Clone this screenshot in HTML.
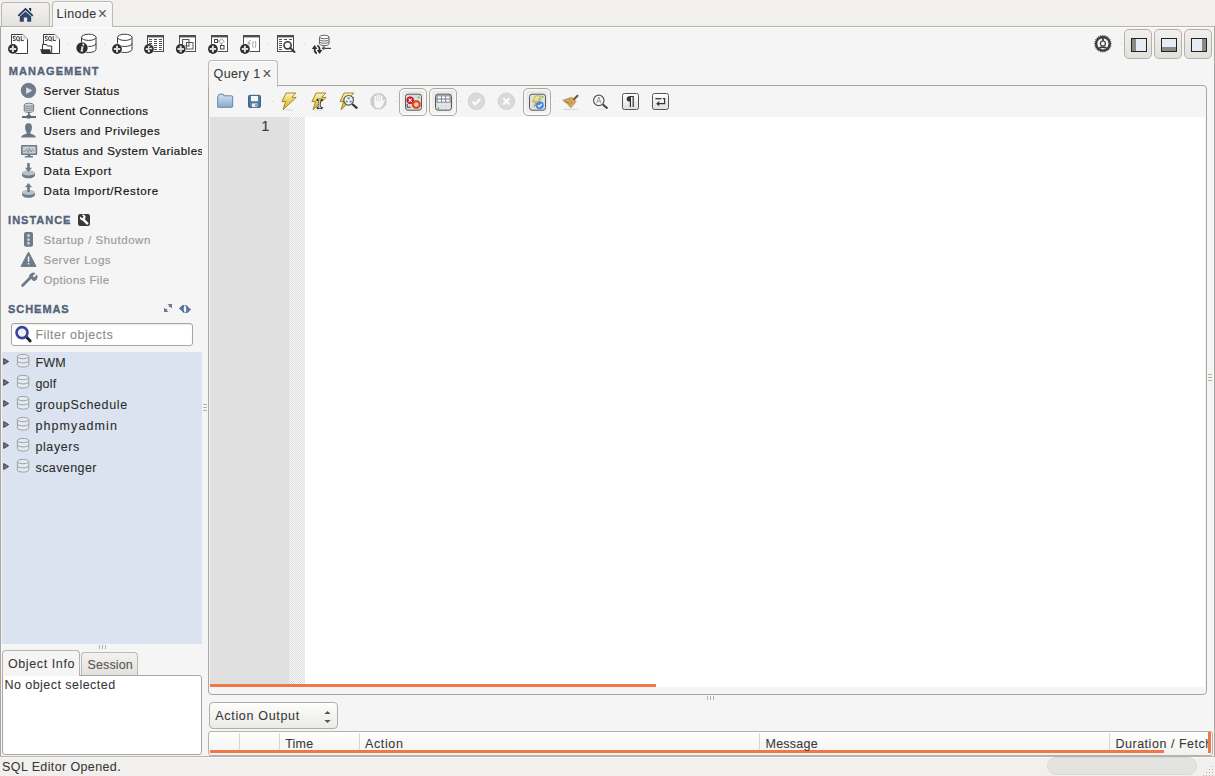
<!DOCTYPE html>
<html><head><meta charset="utf-8">
<style>
*{box-sizing:border-box;margin:0;padding:0}
html,body{width:1215px;height:776px;overflow:hidden;background:#f2f1f0;font-family:"Liberation Sans",sans-serif;color:#3c3c3c}
.a{position:absolute}
.t{position:absolute;white-space:nowrap;-webkit-text-stroke:0.2px currentColor}
svg{position:absolute;overflow:visible}
</style></head><body>
<div class="a" style="left:0px;top:0px;width:1215px;height:26px;background:#f1f0ee"></div>
<div class="a" style="left:1px;top:2px;width:49px;height:24px;border:1px solid #bcb9b2;border-bottom:none;border-radius:4px 4px 0 0;background:linear-gradient(#f3f2f0,#e4e2de)"></div>
<div class="a" style="left:0px;top:26px;width:1215px;height:1px;background:#b6b3ac"></div>
<div class="a" style="left:52px;top:1px;width:61px;height:27px;border:1px solid #bcb9b2;border-bottom:none;border-radius:4px 4px 0 0;background:#f5f5f5;box-shadow:inset 0 1px 0 #fff"></div>
<svg style="left:17px;top:7px" width="17" height="15" viewBox="0 0 17 15"><path d="M8.5 0.8 L0.6 8.3 L1.9 9.6 L8.5 3.3 L15.1 9.6 L16.4 8.3 Z" fill="#263a5e"/><path d="M12 1h2.2v3.8l-2.2-2z" fill="#263a5e"/><path d="M2.8 9.4 L8.5 4.4 L14.2 9.4 V14.8 H10.2 V10.6 H6.8 V14.8 H2.8 Z" fill="#2f456c"/></svg>
<div class="a" style="left:0px;top:27px;width:1215px;height:729px;background:#f5f5f5"></div>
<div class="a" style="left:0px;top:27px;width:1px;height:729px;background:#a9a6a1"></div>
<div class="a" style="left:1214px;top:27px;width:1px;height:729px;background:#a9a6a1"></div>
<div class="a" style="left:1px;top:27px;width:1213px;height:1px;background:#fdfdfd"></div>
<div class="a" style="left:0px;top:756px;width:1215px;height:20px;background:#f1f0ee"></div>
<div class="a" style="left:0px;top:756px;width:1215px;height:1px;background:#b6b3ac"></div>
<div class="a" style="left:0px;top:757px;width:1215px;height:1px;background:#f8f8f7"></div>
<div class="a" style="left:1047px;top:757px;width:150px;height:18px;border-radius:9px;background:#e3e3e1;border:1px solid #dad9d6"></div>
<div class="a" style="left:1212px;top:766px;width:1px;height:1px;background:#b9b6b0"></div>
<div class="a" style="left:1212px;top:769px;width:1px;height:1px;background:#b9b6b0"></div>
<div class="a" style="left:1212px;top:772px;width:1px;height:1px;background:#b9b6b0"></div>
<div class="a" style="left:1209px;top:769px;width:1px;height:1px;background:#b9b6b0"></div>
<div class="a" style="left:1209px;top:772px;width:1px;height:1px;background:#b9b6b0"></div>
<div class="a" style="left:1206px;top:772px;width:1px;height:1px;background:#b9b6b0"></div>
<div class="a" style="left:1212px;top:775px;width:1px;height:1px;background:#b9b6b0"></div>
<div class="a" style="left:1209px;top:775px;width:1px;height:1px;background:#b9b6b0"></div>
<div class="a" style="left:1206px;top:775px;width:1px;height:1px;background:#b9b6b0"></div>
<div class="a" style="left:1203px;top:775px;width:1px;height:1px;background:#b9b6b0"></div>
<svg style="left:0px;top:0px" width="1215" height="60" viewBox="0 0 1215 60"><path d="M11.5 34.5 H22.8 L27.5 39.3 V53.5 H11.5 Z" fill="#fff" stroke="#3b3b3b" stroke-width="1"/><path d="M22.8 34.5 L27.5 39.3 L23 39.5 Z" fill="#ddd"/><g fill="none" stroke="#474747" stroke-width="1.05" transform="translate(0,0)"><path d="M15.5 37 Q14.4 36 13.4 36.7 Q12.6 37.6 14.1 38.4 Q15.7 39.2 15.2 40.1 Q14.3 41 12.9 40.2"/><ellipse cx="18" cy="38.5" rx="1.45" ry="2.05"/><path d="M18.6 40.2 L19.7 41.4"/><path d="M21.2 36.1 V40.4 H23.8"/></g><circle cx="12.9" cy="48.9" r="5.5" fill="rgba(255,255,255,0.85)"/><circle cx="12.9" cy="48.9" r="4.9" fill="#2e2e2e"/><path d="M9.7 47.9h2.2v-2.2h2v2.2h2.2v2h-2.2v2.2h-2v-2.2h-2.2z" fill="#dcdcdc"/><path d="M43.5 34.5 H54.8 L59.5 39.3 V53.5 H43.5 Z" fill="#fff" stroke="#3b3b3b" stroke-width="1"/><path d="M54.8 34.5 L59.5 39.3 L55 39.5 Z" fill="#ddd"/><g fill="none" stroke="#474747" stroke-width="1.05" transform="translate(32,0)"><path d="M15.5 37 Q14.4 36 13.4 36.7 Q12.6 37.6 14.1 38.4 Q15.7 39.2 15.2 40.1 Q14.3 41 12.9 40.2"/><ellipse cx="18" cy="38.5" rx="1.45" ry="2.05"/><path d="M18.6 40.2 L19.7 41.4"/><path d="M21.2 36.1 V40.4 H23.8"/></g><path d="M42.5 44.5h4l1 1.5h4.2v7.5h-9.2z" fill="#fff" stroke="#333"/><path d="M40.2 49.2h9.8l1.2 4.8h-9.4z" fill="#333"/><rect x="68" y="43" width="1" height="1" fill="#cfcfcf"/><rect x="104" y="43" width="1" height="1" fill="#cfcfcf"/><rect x="268" y="43" width="1" height="1" fill="#cfcfcf"/><rect x="304" y="43" width="1" height="1" fill="#cfcfcf"/><path d="M81.5 37.311 V49.389 A7.25 3.111 0 0 0 96.0 49.389 V37.311" fill="#fff" stroke="#3b3b3b" stroke-width="1"/><ellipse cx="88.75" cy="37.311" rx="7.25" ry="3.111" fill="#fff" stroke="#3b3b3b" stroke-width="1"/><path d="M81.5 43.35 A7.25 3.111 0 0 0 96.0 43.35" fill="none" stroke="#3b3b3b" stroke-width="1"/><circle cx="82" cy="48" r="6.3" fill="rgba(255,255,255,0.85)"/><circle cx="82" cy="48" r="5.7" fill="#2e2e2e"/><circle cx="83.3" cy="44.6" r="1.05" fill="#eee"/><path d="M81.2 46.4 H83.7 L82.5 50.6 H83.4 L83.1 51.6 H80.4 L81.6 47.3 H80.9 Z" fill="#eee"/><path d="M117.5 37.311 V49.389 A7.25 3.111 0 0 0 132.0 49.389 V37.311" fill="#fff" stroke="#3b3b3b" stroke-width="1"/><ellipse cx="124.75" cy="37.311" rx="7.25" ry="3.111" fill="#fff" stroke="#3b3b3b" stroke-width="1"/><path d="M117.5 43.35 A7.25 3.111 0 0 0 132.0 43.35" fill="none" stroke="#3b3b3b" stroke-width="1"/><circle cx="117" cy="49" r="5.5" fill="rgba(255,255,255,0.85)"/><circle cx="117" cy="49" r="4.9" fill="#2e2e2e"/><path d="M113.8 48h2.2v-2.2h2v2.2h2.2v2h-2.2v2.2h-2v-2.2h-2.2z" fill="#dcdcdc"/><rect x="147.5" y="35.5" width="16" height="16" fill="#fff" stroke="#4a4e53"/><rect x="147" y="35" width="17" height="2.4" fill="#4a4e53"/><circle cx="148.9" cy="49" r="5.5" fill="rgba(255,255,255,0.85)"/><circle cx="148.9" cy="49" r="4.9" fill="#2e2e2e"/><path d="M145.70000000000002 48h2.2v-2.2h2v2.2h2.2v2h-2.2v2.2h-2v-2.2h-2.2z" fill="#dcdcdc"/><rect x="149" y="39" width="3" height="1" fill="#555"/><rect x="149" y="41" width="3" height="1" fill="#555"/><rect x="149" y="43" width="3" height="1" fill="#555"/><rect x="149" y="45" width="3" height="1" fill="#555"/><rect x="149" y="47" width="3" height="1" fill="#555"/><rect x="149" y="49" width="3" height="1" fill="#555"/><rect x="154" y="39" width="3" height="1" fill="#555"/><rect x="154" y="41" width="3" height="1" fill="#555"/><rect x="154" y="43" width="3" height="1" fill="#555"/><rect x="154" y="45" width="3" height="1" fill="#555"/><rect x="154" y="47" width="3" height="1" fill="#555"/><rect x="154" y="49" width="3" height="1" fill="#555"/><rect x="159" y="39" width="3" height="1" fill="#555"/><rect x="159" y="41" width="3" height="1" fill="#555"/><rect x="159" y="43" width="3" height="1" fill="#555"/><rect x="159" y="45" width="3" height="1" fill="#555"/><rect x="159" y="47" width="3" height="1" fill="#555"/><rect x="159" y="49" width="3" height="1" fill="#555"/><rect x="179.5" y="35.5" width="16" height="16" fill="#fff" stroke="#4a4e53"/><rect x="179" y="35" width="17" height="2.4" fill="#4a4e53"/><rect x="182.5" y="39.5" width="6.5" height="6.5" fill="#f4f4f4" stroke="#555"/><rect x="186.5" y="42.5" width="6.5" height="6.5" fill="none" stroke="#555"/><circle cx="180.7" cy="49" r="5.5" fill="rgba(255,255,255,0.85)"/><circle cx="180.7" cy="49" r="4.9" fill="#2e2e2e"/><path d="M177.5 48h2.2v-2.2h2v2.2h2.2v2h-2.2v2.2h-2v-2.2h-2.2z" fill="#dcdcdc"/><rect x="211.5" y="35.5" width="16" height="16" fill="#fff" stroke="#4a4e53"/><rect x="211" y="35" width="17" height="2.4" fill="#4a4e53"/><rect x="214.5" y="39.5" width="3" height="3" fill="#fff" stroke="#444"/><path d="M217.5 41h1.5 M221.5 43.5v2" stroke="#666" stroke-width="0.8"/><path d="M221.5 38.8l2.6 2.6-2.6 2.6-2.6-2.6z" fill="#fff" stroke="#666" stroke-width="0.7"/><rect x="220.5" y="45.5" width="3.5" height="3.5" fill="#fff" stroke="#444"/><circle cx="212.9" cy="49" r="5.5" fill="rgba(255,255,255,0.85)"/><circle cx="212.9" cy="49" r="4.9" fill="#2e2e2e"/><path d="M209.70000000000002 48h2.2v-2.2h2v2.2h2.2v2h-2.2v2.2h-2v-2.2h-2.2z" fill="#dcdcdc"/><rect x="243.5" y="35.5" width="16" height="16" fill="#fff" stroke="#4a4e53"/><rect x="243" y="35" width="17" height="2.4" fill="#4a4e53"/><g fill="none" stroke="#8a8a8a" stroke-width="0.8"><path d="M251 40.6 Q249.4 40 249 41.6 V48 M247.6 43.2 H250.4"/><path d="M253.2 41.2 Q251.8 44.4 253.2 47.8"/><path d="M255.2 41.2 Q256.6 44.4 255.2 47.8"/></g><circle cx="244.9" cy="49" r="5.5" fill="rgba(255,255,255,0.85)"/><circle cx="244.9" cy="49" r="4.9" fill="#2e2e2e"/><path d="M241.70000000000002 48h2.2v-2.2h2v2.2h2.2v2h-2.2v2.2h-2v-2.2h-2.2z" fill="#dcdcdc"/><rect x="277.5" y="35.5" width="16" height="16" fill="#fff" stroke="#4a4e53"/><rect x="277" y="35" width="17" height="2.4" fill="#4a4e53"/><rect x="279" y="39" width="3" height="1" fill="#555"/><rect x="279" y="41" width="3" height="1" fill="#555"/><rect x="279" y="43" width="3" height="1" fill="#555"/><rect x="279" y="45" width="3" height="1" fill="#555"/><rect x="279" y="47" width="3" height="1" fill="#555"/><rect x="279" y="49" width="3" height="1" fill="#555"/><rect x="284" y="39" width="3" height="1" fill="#555"/><rect x="289" y="39" width="3" height="1" fill="#555"/><circle cx="287.6" cy="45.3" r="3.6" fill="#f4f4f4" stroke="#3a3a3a" stroke-width="1.6"/><path d="M290.2 48 L294.5 52" stroke="#3a3a3a" stroke-width="2" stroke-linecap="round"/><path d="M319.5 36.968 V43.832 A4.75 1.7680000000000002 0 0 0 329.0 43.832 V36.968" fill="#fff" stroke="#555" stroke-width="0.9"/><ellipse cx="324.25" cy="36.968" rx="4.75" ry="1.7680000000000002" fill="#fff" stroke="#555" stroke-width="0.9"/><path d="M319.5 39.256 A4.75 1.7680000000000002 0 0 0 329.0 39.256" fill="none" stroke="#555" stroke-width="0.9"/><path d="M319.5 41.544000000000004 A4.75 1.7680000000000002 0 0 0 329.0 41.544000000000004" fill="none" stroke="#555" stroke-width="0.9"/><path d="M324 45.6v2" stroke="#444"/><path d="M322 48.4h9" stroke="#444" stroke-width="1.2"/><circle cx="323.5" cy="48.4" r="1.4" fill="#555"/><path d="M311.8 49 L314.6 45 L317.4 49 Z" fill="#2f2f2f"/><path d="M314.6 48.5 Q314.2 51.8 316.8 53.6" fill="none" stroke="#2f2f2f" stroke-width="1.7"/><path d="M316.8 50 L319.6 54 L322.4 50 Z" fill="#2f2f2f"/><path d="M319.6 50.5 Q320 47.2 317.4 45.4" fill="none" stroke="#2f2f2f" stroke-width="1.7"/><polygon points="1111.90,43.80 1110.43,44.79 1111.59,46.13 1109.92,46.71 1110.69,48.30 1108.93,48.43 1109.26,50.16 1107.53,49.83 1107.40,51.59 1105.81,50.82 1105.23,52.49 1103.89,51.33 1102.90,52.80 1101.91,51.33 1100.57,52.49 1099.99,50.82 1098.40,51.59 1098.27,49.83 1096.54,50.16 1096.87,48.43 1095.11,48.30 1095.88,46.71 1094.21,46.13 1095.37,44.79 1093.90,43.80 1095.37,42.81 1094.21,41.47 1095.88,40.89 1095.11,39.30 1096.87,39.17 1096.54,37.44 1098.27,37.77 1098.40,36.01 1099.99,36.78 1100.57,35.11 1101.91,36.27 1102.90,34.80 1103.89,36.27 1105.23,35.11 1105.81,36.78 1107.40,36.01 1107.53,37.77 1109.26,37.44 1108.93,39.17 1110.69,39.30 1109.92,40.89 1111.59,41.47 1110.43,42.81" fill="#3d3d3d"/><circle cx="1102.9" cy="43.8" r="5.6" fill="#f5f5f5"/><path d="M1102.0 37.8 h1.8 v3.5 h-1.8z" fill="#3d3d3d"/><circle cx="1102.9" cy="43.5" r="2.5" fill="#f5f5f5" stroke="#3d3d3d" stroke-width="1.2"/><path d="M1098.7 47.4 Q1102.9 45.0 1107.1000000000001 47.4 L1106.1000000000001 48.599999999999994 Q1102.9 47.199999999999996 1099.7 48.599999999999994 Z" fill="#3d3d3d"/><rect x="1121" y="43" width="1" height="1" fill="#cfcfcf"/></svg>
<div class="a" style="left:1124px;top:29px;width:28px;height:30px;border:1px solid #b4b1ab;border-radius:5px;background:linear-gradient(#f1f0ee,#e2e0dc)"></div>
<div class="a" style="left:1154px;top:29px;width:28px;height:30px;border:1px solid #b4b1ab;border-radius:5px;background:linear-gradient(#f1f0ee,#e2e0dc)"></div>
<div class="a" style="left:1184px;top:29px;width:28px;height:30px;border:1px solid #b4b1ab;border-radius:5px;background:linear-gradient(#f1f0ee,#e2e0dc)"></div>
<svg style="left:0px;top:0px" width="1215" height="60" viewBox="0 0 1215 60"><rect x="1131.5" y="38.5" width="15" height="13" fill="#e6ecf3" stroke="#222"/><rect x="1132" y="39" width="4" height="12" fill="#8a8a8a"/><rect x="1161.5" y="38.5" width="15" height="13" fill="#e6ecf3" stroke="#222"/><rect x="1162" y="47" width="14" height="4" fill="#8a8a8a"/><rect x="1191.5" y="38.5" width="15" height="13" fill="#e6ecf3" stroke="#222"/><rect x="1202" y="39" width="4" height="12" fill="#8a8a8a"/></svg>
<div class="a" style="left:2px;top:352px;width:200px;height:292px;background:#dae3ef"></div>
<div class="a" style="left:11px;top:323px;width:182px;height:23px;border:1px solid #a9a6a0;border-radius:3px;background:#fff;box-shadow:inset 0 1px 1px rgba(0,0,0,0.08)"></div>
<div class="a" style="left:2px;top:650px;width:78px;height:27px;border:1px solid #b6b3ac;border-bottom:none;border-radius:4px 4px 0 0;background:#f5f5f5"></div>
<div class="a" style="left:81px;top:652px;width:57px;height:24px;border:1px solid #bcb9b2;border-bottom:none;border-radius:4px 4px 0 0;background:linear-gradient(#f3f2f0,#e2e0dc)"></div>
<div class="a" style="left:2px;top:675px;width:200px;height:80px;border:1px solid #aaa7a1;border-radius:0 3px 3px 3px;background:#fff"></div>
<div class="a" style="left:3px;top:675px;width:76px;height:1px;background:#f5f5f5"></div>
<div class="a" style="left:203px;top:404px;width:4px;height:1px;background:#b5b2ac"></div>
<div class="a" style="left:1208px;top:374px;width:4px;height:1px;background:#b5b2ac"></div>
<div class="a" style="left:203px;top:407px;width:4px;height:1px;background:#b5b2ac"></div>
<div class="a" style="left:1208px;top:377px;width:4px;height:1px;background:#b5b2ac"></div>
<div class="a" style="left:203px;top:410px;width:4px;height:1px;background:#b5b2ac"></div>
<div class="a" style="left:1208px;top:380px;width:4px;height:1px;background:#b5b2ac"></div>
<div class="a" style="left:99px;top:645px;width:1px;height:4px;background:#b5b2ac"></div>
<div class="a" style="left:704px;top:688px;width:1px;height:4px;background:#b5b2ac"></div>
<div class="a" style="left:707px;top:696px;width:1px;height:4px;background:#b5b2ac"></div>
<div class="a" style="left:102px;top:645px;width:1px;height:4px;background:#b5b2ac"></div>
<div class="a" style="left:707px;top:688px;width:1px;height:4px;background:#b5b2ac"></div>
<div class="a" style="left:710px;top:696px;width:1px;height:4px;background:#b5b2ac"></div>
<div class="a" style="left:105px;top:645px;width:1px;height:4px;background:#b5b2ac"></div>
<div class="a" style="left:710px;top:688px;width:1px;height:4px;background:#b5b2ac"></div>
<div class="a" style="left:713px;top:696px;width:1px;height:4px;background:#b5b2ac"></div>
<svg style="left:0px;top:0px" width="210" height="776" viewBox="0 0 210 776"><circle cx="28.5" cy="90.5" r="7.3" fill="#6f7c8b" stroke="#5d6978" stroke-width="0.6"/><path d="M26.2 87.2 V94 L32.3 90.6 Z" fill="#dde2e8"/><path d="M24.2 104.76400000000001 V110.83600000000001 A4.7 1.564 0 0 0 33.6 110.83600000000001 V104.76400000000001" fill="#d4d9df" stroke="#6b7686" stroke-width="0.9"/><ellipse cx="28.9" cy="104.76400000000001" rx="4.7" ry="1.564" fill="#d4d9df" stroke="#6b7686" stroke-width="0.9"/><path d="M24.2 106.78800000000001 A4.7 1.564 0 0 0 33.6 106.78800000000001" fill="none" stroke="#6b7686" stroke-width="0.9"/><path d="M24.2 108.81200000000001 A4.7 1.564 0 0 0 33.6 108.81200000000001" fill="none" stroke="#6b7686" stroke-width="0.9"/><rect x="22" y="116" width="14" height="2" fill="#5d6a7a"/><rect x="28" y="112" width="1.6" height="4" fill="#5d6a7a"/><rect x="26.5" y="115" width="4.5" height="3.5" rx="1" fill="#5d6a7a"/><path d="M28.3 123.2 C25.6 123.2 24.9 125.5 25.1 128 C25.3 130 26 131.8 26.8 132.6 L26.6 133.6 C24 134.4 21.5 135.3 21 137.6 H36 C35.5 135.3 33 134.4 30.4 133.6 L30.2 132.6 C31 131.8 31.7 130 31.9 128 C32.1 125.5 31.4 123.2 28.7 123.2 Z" fill="#6b7787"/><rect x="21" y="145" width="16.2" height="10" rx="1" fill="#6e7a89"/><rect x="22.6" y="146.5" width="13" height="7" fill="#c9cfd7"/><path d="M23 151 L25 151.5 L26.5 149 L28 152.5 L29.5 148 L31 152 L32.5 149.5 L34.5 151.5" fill="none" stroke="#6e7a89" stroke-width="0.7"/><rect x="27.5" y="155" width="3" height="1.2" fill="#6e7a89"/><rect x="24.8" y="156" width="8.2" height="1.5" fill="#6e7a89"/><ellipse cx="28.5" cy="175.3" rx="6.4" ry="3" fill="#6e7a89"/><rect x="22.1" y="172.8" width="12.8" height="2.6" fill="#6e7a89"/><ellipse cx="28.5" cy="172.9" rx="6.4" ry="2.6" fill="#b8c0c9"/><path d="M27.2 163 h2.6 v4.8 h2.2 l-3.5 4.2 -3.5 -4.2 h2.2z" fill="#6e7a89"/><ellipse cx="28.5" cy="194.8" rx="6.4" ry="3" fill="#6e7a89"/><rect x="22.1" y="192.3" width="12.8" height="2.6" fill="#6e7a89"/><ellipse cx="28.5" cy="192.4" rx="6.4" ry="2.6" fill="#b8c0c9"/><path d="M27.2 192 h2.6 v-4.8 h2.2 l-3.5 -4.2 -3.5 4.2 h2.2z" fill="#6e7a89"/><rect x="78" y="214" width="12" height="12" rx="2.2" fill="#3a3a3a"/><path d="M87.2 223.4 L83.2 219.4" stroke="#fff" stroke-width="2.5" stroke-linecap="round"/><path d="M83.6 220 a2.6 2.6 0 0 1 -3.4 -3.6 l1.6 1.6 1.3 -0.3 0.3 -1.3 -1.6 -1.6 a2.6 2.6 0 0 1 3.6 3.4 z" fill="#fff"/><rect x="24" y="232" width="9" height="14.7" rx="2" fill="#6e7a89"/><circle cx="28.5" cy="235.6" r="1.5" fill="#c7ccd3"/><circle cx="28.5" cy="239.4" r="1.5" fill="#c7ccd3"/><circle cx="28.5" cy="243.2" r="1.5" fill="#c7ccd3"/><path d="M28.5 252 L36 266.4 H21 Z" fill="#6e7a89" stroke="#6e7a89" stroke-linejoin="round" stroke-width="1"/><rect x="27.8" y="256.5" width="1.5" height="5.5" fill="#eef0f3"/><rect x="27.8" y="263" width="1.5" height="1.5" fill="#eef0f3"/><path d="M22.6 285.4 L30 278" stroke="#6e7a89" stroke-width="2.8" stroke-linecap="round"/><path d="M29 276.8 a4.3 4.3 0 0 1 6.5 -3.6 l-2.8 2.8 1.4 1.4 2.8 -2.8 a4.3 4.3 0 0 1 -3.6 6.5 z" fill="#6e7a89"/><path d="M167.6 304 h4.4 v4.4 z M164 312 v-4.4 l4.4 4.4 z" fill="#6b7a8c"/><path d="M170.6 305.4 l-1.6 1.6 M165.4 310.6 l1.6 -1.6" stroke="#6b7a8c" stroke-width="1.3"/><path d="M178.9 308.6 L182.6 304.9 L184.9 304.9 Q182.6 307.6 184.9 313.2 Q182.2 312.4 181.4 310.4 Z M191.1 309.4 L187.4 313.1 L185.1 313.1 Q187.4 310.4 185.1 304.8 Q187.8 305.6 188.6 307.6 Z" fill="#56759a"/><path d="M26.4 337 L30.2 341" stroke="#1e1e1e" stroke-width="2.8" stroke-linecap="round"/><circle cx="22" cy="332.6" r="5.5" fill="#eef0f6" stroke="#34469b" stroke-width="2.6"/><path d="M3.7 358.6 L8.7 361.5 L3.7 364.4 Z" fill="#777" stroke="#3a3a3a" stroke-width="0.9" stroke-linejoin="round"/><path d="M17.4 356.55899999999997 V364.941 A5.7 2.1590000000000003 0 0 0 28.799999999999997 364.941 V356.55899999999997" fill="#e6e9ee" stroke="#9ca3ac" stroke-width="1"/><ellipse cx="23.099999999999998" cy="356.55899999999997" rx="5.7" ry="2.1590000000000003" fill="#e6e9ee" stroke="#9ca3ac" stroke-width="1"/><path d="M17.4 360.74999999999994 A5.7 2.1590000000000003 0 0 0 28.799999999999997 360.74999999999994" fill="none" stroke="#9ca3ac" stroke-width="1"/><path d="M3.7 379.6 L8.7 382.5 L3.7 385.4 Z" fill="#777" stroke="#3a3a3a" stroke-width="0.9" stroke-linejoin="round"/><path d="M17.4 377.55899999999997 V385.941 A5.7 2.1590000000000003 0 0 0 28.799999999999997 385.941 V377.55899999999997" fill="#e6e9ee" stroke="#9ca3ac" stroke-width="1"/><ellipse cx="23.099999999999998" cy="377.55899999999997" rx="5.7" ry="2.1590000000000003" fill="#e6e9ee" stroke="#9ca3ac" stroke-width="1"/><path d="M17.4 381.74999999999994 A5.7 2.1590000000000003 0 0 0 28.799999999999997 381.74999999999994" fill="none" stroke="#9ca3ac" stroke-width="1"/><path d="M3.7 400.6 L8.7 403.5 L3.7 406.4 Z" fill="#777" stroke="#3a3a3a" stroke-width="0.9" stroke-linejoin="round"/><path d="M17.4 398.55899999999997 V406.941 A5.7 2.1590000000000003 0 0 0 28.799999999999997 406.941 V398.55899999999997" fill="#e6e9ee" stroke="#9ca3ac" stroke-width="1"/><ellipse cx="23.099999999999998" cy="398.55899999999997" rx="5.7" ry="2.1590000000000003" fill="#e6e9ee" stroke="#9ca3ac" stroke-width="1"/><path d="M17.4 402.74999999999994 A5.7 2.1590000000000003 0 0 0 28.799999999999997 402.74999999999994" fill="none" stroke="#9ca3ac" stroke-width="1"/><path d="M3.7 421.6 L8.7 424.5 L3.7 427.4 Z" fill="#777" stroke="#3a3a3a" stroke-width="0.9" stroke-linejoin="round"/><path d="M17.4 419.55899999999997 V427.941 A5.7 2.1590000000000003 0 0 0 28.799999999999997 427.941 V419.55899999999997" fill="#e6e9ee" stroke="#9ca3ac" stroke-width="1"/><ellipse cx="23.099999999999998" cy="419.55899999999997" rx="5.7" ry="2.1590000000000003" fill="#e6e9ee" stroke="#9ca3ac" stroke-width="1"/><path d="M17.4 423.74999999999994 A5.7 2.1590000000000003 0 0 0 28.799999999999997 423.74999999999994" fill="none" stroke="#9ca3ac" stroke-width="1"/><path d="M3.7 442.6 L8.7 445.5 L3.7 448.4 Z" fill="#777" stroke="#3a3a3a" stroke-width="0.9" stroke-linejoin="round"/><path d="M17.4 440.55899999999997 V448.941 A5.7 2.1590000000000003 0 0 0 28.799999999999997 448.941 V440.55899999999997" fill="#e6e9ee" stroke="#9ca3ac" stroke-width="1"/><ellipse cx="23.099999999999998" cy="440.55899999999997" rx="5.7" ry="2.1590000000000003" fill="#e6e9ee" stroke="#9ca3ac" stroke-width="1"/><path d="M17.4 444.74999999999994 A5.7 2.1590000000000003 0 0 0 28.799999999999997 444.74999999999994" fill="none" stroke="#9ca3ac" stroke-width="1"/><path d="M3.7 463.6 L8.7 466.5 L3.7 469.4 Z" fill="#777" stroke="#3a3a3a" stroke-width="0.9" stroke-linejoin="round"/><path d="M17.4 461.55899999999997 V469.941 A5.7 2.1590000000000003 0 0 0 28.799999999999997 469.941 V461.55899999999997" fill="#e6e9ee" stroke="#9ca3ac" stroke-width="1"/><ellipse cx="23.099999999999998" cy="461.55899999999997" rx="5.7" ry="2.1590000000000003" fill="#e6e9ee" stroke="#9ca3ac" stroke-width="1"/><path d="M17.4 465.74999999999994 A5.7 2.1590000000000003 0 0 0 28.799999999999997 465.74999999999994" fill="none" stroke="#9ca3ac" stroke-width="1"/></svg>
<div class="a" style="left:208px;top:85px;width:999px;height:610px;border:1px solid #a9a6a0;border-radius:0 4px 4px 4px;background:#f5f5f5"></div>
<div class="a" style="left:208px;top:60px;width:70px;height:27px;border:1px solid #bcb9b2;border-bottom:none;border-radius:4px 4px 0 0;background:#f5f5f5;box-shadow:inset 0 1px 0 #fff"></div>
<div class="a" style="left:210px;top:117px;width:995px;height:570px;background:#fff"></div>
<div class="a" style="left:210px;top:117px;width:79px;height:567px;background:#e0e0e0"></div>
<div class="a" style="left:289px;top:117px;width:16px;height:567px;background-color:#f4f4f4;background-image:repeating-conic-gradient(#dcdcdc 0 25%, #fafafa 0 50%);background-size:2px 2px;background-position:0 1px"></div>
<div class="a" style="left:210px;top:684px;width:446px;height:3px;background:#f07746"></div>
<div class="a" style="left:399px;top:88px;width:28px;height:28px;border:1px solid #aeaba5;border-radius:5px;background:linear-gradient(#e9e8e6,#f3f2f0);box-shadow:inset 0 0 0 2px rgba(255,255,255,0.5)"></div>
<div class="a" style="left:429px;top:88px;width:28px;height:28px;border:1px solid #aeaba5;border-radius:5px;background:linear-gradient(#e9e8e6,#f3f2f0);box-shadow:inset 0 0 0 2px rgba(255,255,255,0.5)"></div>
<div class="a" style="left:523px;top:88px;width:28px;height:28px;border:1px solid #aeaba5;border-radius:5px;background:linear-gradient(#e9e8e6,#f3f2f0);box-shadow:inset 0 0 0 2px rgba(255,255,255,0.5)"></div>
<svg style="left:0px;top:0px" width="700" height="120" viewBox="0 0 700 120"><defs><linearGradient id="fg" x1="0" y1="0" x2="0" y2="1"><stop offset="0" stop-color="#d3e5f4"/><stop offset="1" stop-color="#86aacb"/></linearGradient><linearGradient id="lg" x1="0" y1="0" x2="0" y2="1"><stop offset="0" stop-color="#fbf3c2"/><stop offset="0.5" stop-color="#e8cf55"/><stop offset="1" stop-color="#d7b834"/></linearGradient></defs><path d="M217.7 107.3 V96.8 Q217.7 95.8 218.7 95.8 V95 Q218.7 94.2 219.5 94.2 H223 Q223.8 94.2 223.8 95 V95.8 H231.7 Q232.7 95.8 232.7 96.8 V106.3 Q232.7 107.3 231.7 107.3 Z" fill="url(#fg)" stroke="#5f87a8" stroke-width="1"/><rect x="248.5" y="95.3" width="12" height="12.2" rx="1.3" fill="#4d7ca2" stroke="#386587"/><rect x="251" y="96" width="7" height="5.2" fill="#f4f6f8"/><rect x="251.8" y="103.4" width="5.5" height="3.8" fill="#e8ecef"/><rect x="255.5" y="104" width="1" height="2.6" fill="#556"/><rect x="272" y="101" width="1" height="1" fill="#cfcfcf"/><rect x="396" y="101" width="1" height="1" fill="#cfcfcf"/><rect x="460" y="101" width="1" height="1" fill="#cfcfcf"/><rect x="554" y="101" width="1" height="1" fill="#cfcfcf"/><path d="M286.1 93 H295.8 L291.8 97.4 H296.2 L283 109.7 L285.6 101.6 H281.9 Z" fill="url(#lg)" stroke="#9c7a1c" stroke-width="0.9" stroke-linejoin="round"/><ellipse cx="289" cy="109.8" rx="5" ry="0.9" fill="rgba(0,0,0,0.08)"/><path d="M316.1 93 H325.8 L321.8 97.4 H326.2 L313 109.7 L315.6 101.6 H311.9 Z" fill="url(#lg)" stroke="#9c7a1c" stroke-width="0.9" stroke-linejoin="round"/><ellipse cx="319" cy="109.8" rx="5" ry="0.9" fill="rgba(0,0,0,0.08)"/><path d="M317.6 99.8 h4.2 M317.6 107.8 h4.2 M319.7 99.8 v8" stroke="#222" stroke-width="2.2" stroke-linecap="round"/><path d="M318.2 99.8 h3 M318.2 107.8 h3 M319.7 100 v7.6" stroke="#fff" stroke-width="0.9"/><path d="M344 93 H353.8 L349.8 97.4 H354 L341 109.7 L343.6 101.6 H340 Z" fill="url(#lg)" stroke="#9c7a1c" stroke-width="0.9" stroke-linejoin="round"/><circle cx="348.6" cy="100.3" r="4.8" fill="#fbf6dc" stroke="#555" stroke-width="1.2"/><circle cx="348.6" cy="98.3" r="1.2" fill="#6a9ad8"/><circle cx="346.6" cy="101.6" r="1.2" fill="#6a9ad8"/><circle cx="350.6" cy="101.6" r="1.2" fill="#6a9ad8"/><path d="M352.2 104 L357.3 108.4" stroke="#333" stroke-width="2.2"/><polygon points="386.45,104.59 381.79,109.25 375.21,109.25 370.55,104.59 370.55,98.01 375.21,93.35 381.79,93.35 386.45,98.01" fill="#cccaca"/><path d="M375.2 96.6 V102 M377.4 95.4 V101.5 M379.6 95.4 V101.5 M381.8 96.6 V102" stroke="#f6f6f6" stroke-width="1.7" stroke-linecap="round"/><path d="M374.4 101 H382.6 L384.2 99.6 Q385.2 99.8 384.6 101 L382.4 106 Q381.4 108.2 378.6 108.2 Q374.4 108.2 374.4 104.5 Z" fill="#f6f6f6"/><rect x="405.5" y="94.2" width="16" height="16" rx="2.5" fill="#d9dbdd" stroke="#5a5a5a" stroke-width="1"/><circle cx="410.2" cy="100.2" r="3.7" fill="#c8141c"/><path d="M408.6 98.6 l3.2 3.2 M411.8 98.6 l-3.2 3.2" stroke="#fff" stroke-width="1.1"/><polygon points="420.64,106.30 418.10,108.84 414.50,108.84 411.96,106.30 411.96,102.70 414.50,100.16 418.10,100.16 420.64,102.70" fill="#e2461b"/><circle cx="416.3" cy="104.5" r="2.3" fill="#f6d0c0"/><circle cx="418.6" cy="97.4" r="0.9" fill="#3ecf1e"/><path d="M407.2 104 v3.3 h3.3" fill="none" stroke="#333" stroke-width="0.9"/><rect x="435.5" y="94.2" width="16" height="16" rx="2.5" fill="#d4d7da" stroke="#5a5a5a" stroke-width="1"/><rect x="436.5" y="95.5" width="14" height="7" fill="#6b7682"/><rect x="437.5" y="96.3" width="3.5" height="2.2" fill="#fff"/><rect x="437.5" y="103.3" width="3.5" height="2.2" fill="#e8eaec"/><rect x="441.8" y="96.3" width="3.5" height="2.2" fill="#fff"/><rect x="441.8" y="103.3" width="3.5" height="2.2" fill="#e8eaec"/><rect x="446.1" y="96.3" width="3.5" height="2.2" fill="#fff"/><rect x="446.1" y="103.3" width="3.5" height="2.2" fill="#e8eaec"/><rect x="437.5" y="99.5" width="3.5" height="2.2" fill="#fff"/><rect x="437.5" y="106.5" width="3.5" height="2.2" fill="#e8eaec"/><rect x="441.8" y="99.5" width="3.5" height="2.2" fill="#fff"/><rect x="441.8" y="106.5" width="3.5" height="2.2" fill="#e8eaec"/><rect x="446.1" y="99.5" width="3.5" height="2.2" fill="#fff"/><rect x="446.1" y="106.5" width="3.5" height="2.2" fill="#e8eaec"/><circle cx="438.5" cy="108.2" r="0.9" fill="#3ecf1e"/><circle cx="476.4" cy="101.3" r="8.3" fill="#dadada" stroke="#cdcdcd" stroke-width="0.8"/><path d="M472.6 101.6 l2.6 2.6 l5 -5.2" fill="none" stroke="#fff" stroke-width="2"/><circle cx="506.4" cy="101.3" r="8.3" fill="#dadada" stroke="#cdcdcd" stroke-width="0.8"/><path d="M503.3 98.2 l6.2 6.2 M509.5 98.2 l-6.2 6.2" stroke="#fff" stroke-width="2"/><rect x="529.5" y="94.2" width="16" height="16" rx="2.5" fill="#dfe0e2" stroke="#5a5a5a" stroke-width="1"/><path d="M535.5 96 H541 L538.5 99 H541.2 L534 107 L535.5 101.8 H532.5 Z" fill="url(#lg)" stroke="#a5852a" stroke-width="0.6"/><circle cx="539.8" cy="105.2" r="4" fill="#4c8ae0"/><path d="M537.8 105.2 l1.4 1.4 l2.6 -2.6" fill="none" stroke="#fff" stroke-width="1.1"/><circle cx="542.5" cy="97" r="0.9" fill="#3ecf1e"/><ellipse cx="570.5" cy="109.4" rx="8" ry="0.9" fill="rgba(0,0,0,0.1)"/><path d="M562.8 100.2 Q568 98.5 572 97.3 L576 101.5 Q574 104.5 570.8 107.8 Q567.5 103 562.8 100.2 Z" fill="#d2ab5e" stroke="#9d7a3a" stroke-width="0.6"/><path d="M566 100.5 l4 4.5 M569 99.3 l3.5 4.5 M564.5 102 l5 1" stroke="#8d6b2b" stroke-width="0.5"/><path d="M574 99.3 L577.5 95.8" stroke="#7a5220" stroke-width="2" stroke-linecap="round"/><circle cx="598.8" cy="100.4" r="5.2" fill="#f8f8f8" stroke="#555" stroke-width="1.2"/><path d="M596.6 103.2 L598.8 97 L601 103.2 M597.4 101.3 h2.8" fill="none" stroke="#777" stroke-width="0.7"/><path d="M602.8 104.4 L607.5 108.5" stroke="#3a3a3a" stroke-width="2"/><ellipse cx="601" cy="109.3" rx="5" ry="0.8" fill="rgba(0,0,0,0.08)"/><defs><linearGradient id="bg2" x1="0" y1="0" x2="0" y2="1"><stop offset="0" stop-color="#fff"/><stop offset="1" stop-color="#dedede"/></linearGradient></defs><rect x="622.5" y="93.5" width="16" height="16" rx="2" fill="url(#bg2)" stroke="#555"/><path d="M630 96.5 h3.8 M630.4 96.5 v10.5 M633.2 96.5 v10.5" stroke="#333" stroke-width="1.2"/><path d="M630.6 96 Q626.6 96 626.6 99 Q626.6 101.8 630.6 101.8 Z" fill="#333"/><rect x="652.5" y="93.5" width="16" height="16" rx="2" fill="url(#bg2)" stroke="#555"/><path d="M655.4 98.7 h6" stroke="#333" stroke-width="1.3"/><path d="M662.8 98.7 h1.8 v5 h-5.5" fill="none" stroke="#333" stroke-width="1.2"/><path d="M656.2 103.7 l3 -2.6 v5.2 z" fill="#333"/></svg>
<div class="a" style="left:209px;top:702px;width:129px;height:27px;border:1px solid #b1aea8;border-radius:4px;background:linear-gradient(#fdfdfc,#ebeae8)"></div>
<svg style="left:323px;top:709px" width="9" height="15" viewBox="0 0 9 15"><path d="M1.3 5 L4.5 2 L7.7 5 Z M1.3 11 L4.5 14 L7.7 11 Z" fill="#555"/></svg>
<div class="a" style="left:208px;top:731px;width:1005px;height:25px;border:1px solid #b6b3ac;border-radius:3px;background:linear-gradient(#ffffff,#f1f1f0)"></div>
<div class="a" style="left:239px;top:733px;width:1px;height:19px;background:#d8d6d2"></div>
<div class="a" style="left:279px;top:733px;width:1px;height:19px;background:#d8d6d2"></div>
<div class="a" style="left:359px;top:733px;width:1px;height:19px;background:#d8d6d2"></div>
<div class="a" style="left:759px;top:733px;width:1px;height:19px;background:#d8d6d2"></div>
<div class="a" style="left:1109px;top:733px;width:1px;height:19px;background:#d8d6d2"></div>
<div class="a" style="left:210px;top:750px;width:954px;height:3px;background:#f07746"></div>
<div class="a" style="left:1208px;top:732px;width:3px;height:21px;background:#f07746"></div>
<div class="t" style="left:56.50px;top:5.67px;font-size:12.5px;line-height:16px;font-weight:400;color:#383838;letter-spacing:0.45px;-webkit-text-stroke:0.08px currentColor">Linode</div>
<div class="t" style="left:97.76px;top:4.26px;font-size:16px;line-height:20px;font-weight:400;color:#3c3c3c;letter-spacing:0px;-webkit-text-stroke:0;color:#555">×</div>
<div class="t" style="left:8.70px;top:64.19px;font-size:11px;line-height:14px;font-weight:700;color:#54637a;letter-spacing:1.078px;-webkit-text-stroke:0.35px currentColor">MANAGEMENT</div>
<div class="t" style="left:43.50px;top:84.02px;font-size:11.5px;line-height:14px;font-weight:400;color:#161616;letter-spacing:0.5px;">Server Status</div>
<div class="t" style="left:43.50px;top:104.02px;font-size:11.5px;line-height:14px;font-weight:400;color:#161616;letter-spacing:0.471px;">Client Connections</div>
<div class="t" style="left:43.50px;top:124.02px;font-size:11.5px;line-height:14px;font-weight:400;color:#161616;letter-spacing:0.568px;">Users and Privileges</div>
<div class="t" style="left:43.50px;top:144.02px;font-size:11.5px;line-height:14px;font-weight:400;color:#161616;letter-spacing:0.5px;width:158.5px;overflow:hidden">Status and System Variables</div>
<div class="t" style="left:43.50px;top:164.02px;font-size:11.5px;line-height:14px;font-weight:400;color:#161616;letter-spacing:0.7px;">Data Export</div>
<div class="t" style="left:43.50px;top:184.02px;font-size:11.5px;line-height:14px;font-weight:400;color:#161616;letter-spacing:0.611px;">Data Import/Restore</div>
<div class="t" style="left:8.10px;top:213.39px;font-size:11px;line-height:14px;font-weight:700;color:#54637a;letter-spacing:0.986px;-webkit-text-stroke:0.35px currentColor">INSTANCE</div>
<div class="t" style="left:43.50px;top:233.22px;font-size:11.5px;line-height:14px;font-weight:400;color:#9c9c9c;letter-spacing:0.529px;">Startup / Shutdown</div>
<div class="t" style="left:43.50px;top:253.22px;font-size:11.5px;line-height:14px;font-weight:400;color:#9c9c9c;letter-spacing:0.51px;">Server Logs</div>
<div class="t" style="left:43.50px;top:273.22px;font-size:11.5px;line-height:14px;font-weight:400;color:#9c9c9c;letter-spacing:0.382px;">Options File</div>
<div class="t" style="left:8.10px;top:302.39px;font-size:11px;line-height:14px;font-weight:700;color:#54637a;letter-spacing:0.933px;-webkit-text-stroke:0.35px currentColor">SCHEMAS</div>
<div class="t" style="left:35.40px;top:326.67px;font-size:12.5px;line-height:16px;font-weight:400;color:#8a8a8a;letter-spacing:0.492px;-webkit-text-stroke:0.08px currentColor">Filter objects</div>
<div class="t" style="left:35.50px;top:354.67px;font-size:12.5px;line-height:16px;font-weight:400;color:#2c2c2c;letter-spacing:0.2px;-webkit-text-stroke:0.08px currentColor">FWM</div>
<div class="t" style="left:35.50px;top:375.67px;font-size:12.5px;line-height:16px;font-weight:400;color:#2c2c2c;letter-spacing:0.167px;-webkit-text-stroke:0.08px currentColor">golf</div>
<div class="t" style="left:35.50px;top:396.67px;font-size:12.5px;line-height:16px;font-weight:400;color:#2c2c2c;letter-spacing:0.625px;-webkit-text-stroke:0.08px currentColor">groupSchedule</div>
<div class="t" style="left:35.50px;top:417.67px;font-size:12.5px;line-height:16px;font-weight:400;color:#2c2c2c;letter-spacing:1.089px;-webkit-text-stroke:0.08px currentColor">phpmyadmin</div>
<div class="t" style="left:35.50px;top:438.67px;font-size:12.5px;line-height:16px;font-weight:400;color:#2c2c2c;letter-spacing:0.567px;-webkit-text-stroke:0.08px currentColor">players</div>
<div class="t" style="left:35.50px;top:459.67px;font-size:12.5px;line-height:16px;font-weight:400;color:#2c2c2c;letter-spacing:0.412px;-webkit-text-stroke:0.08px currentColor">scavenger</div>
<div class="t" style="left:8.00px;top:655.97px;font-size:12.5px;line-height:16px;font-weight:400;color:#383838;letter-spacing:0.6px;-webkit-text-stroke:0.08px currentColor">Object Info</div>
<div class="t" style="left:87.50px;top:656.57px;font-size:12.5px;line-height:16px;font-weight:400;color:#555555;letter-spacing:0.117px;-webkit-text-stroke:0.08px currentColor">Session</div>
<div class="t" style="left:4.40px;top:676.67px;font-size:12.5px;line-height:16px;font-weight:400;color:#383838;letter-spacing:0.465px;-webkit-text-stroke:0.08px currentColor">No object selected</div>
<div class="t" style="left:2.10px;top:758.97px;font-size:12.5px;line-height:16px;font-weight:400;color:#383838;letter-spacing:0.38px;-webkit-text-stroke:0.08px currentColor">SQL Editor Opened.</div>
<div class="t" style="left:213.60px;top:65.87px;font-size:12.5px;line-height:16px;font-weight:400;color:#383838;letter-spacing:0.367px;-webkit-text-stroke:0.08px currentColor">Query 1</div>
<div class="t" style="left:262.30px;top:64.21px;font-size:16px;line-height:20px;font-weight:400;color:#3c3c3c;letter-spacing:0px;-webkit-text-stroke:0;color:#555">×</div>
<div class="t" style="left:261.60px;top:116.95px;font-size:14px;line-height:18px;font-weight:400;color:#3c3c3c;letter-spacing:0px;font-family:"Liberation Mono",monospace">1</div>
<div class="t" style="left:215.30px;top:707.67px;font-size:12.5px;line-height:16px;font-weight:400;color:#383838;letter-spacing:0.683px;-webkit-text-stroke:0.08px currentColor">Action Output</div>
<div class="t" style="left:285.20px;top:735.77px;font-size:12.5px;line-height:16px;font-weight:400;color:#383838;letter-spacing:0.233px;-webkit-text-stroke:0.08px currentColor">Time</div>
<div class="t" style="left:365.00px;top:735.77px;font-size:12.5px;line-height:16px;font-weight:400;color:#383838;letter-spacing:0.62px;-webkit-text-stroke:0.08px currentColor">Action</div>
<div class="t" style="left:765.50px;top:735.77px;font-size:12.5px;line-height:16px;font-weight:400;color:#383838;letter-spacing:0.25px;-webkit-text-stroke:0.08px currentColor">Message</div>
<div class="t" style="left:1115.40px;top:735.77px;font-size:12.5px;line-height:16px;font-weight:400;color:#383838;letter-spacing:0.533px;width:93px;overflow:hidden;-webkit-text-stroke:0.08px currentColor">Duration / Fetch</div>
</body></html>
